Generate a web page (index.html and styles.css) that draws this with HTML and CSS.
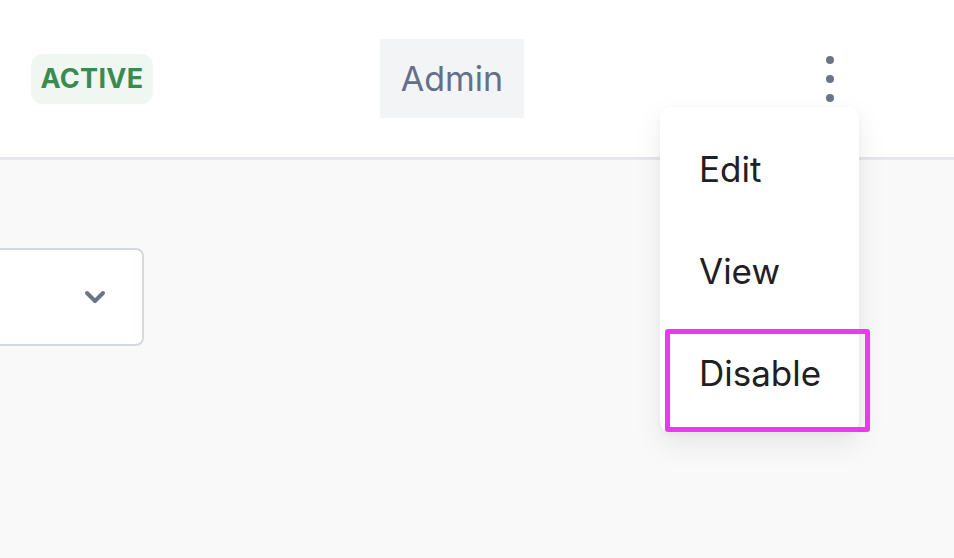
FILE: index.html
```html
<!DOCTYPE html>
<html>
<head>
<meta charset="utf-8">
<link rel="stylesheet" href="styles.css">
</head>
<body>
<div class="page">
  <div class="row">
    <div class="cell-status"><span class="badge">ACTIVE</span></div>
    <div class="cell-role"><span class="role">Admin</span></div>
    <div class="cell-actions">
      <button class="kebab" aria-label="Actions">
        <svg width="10" height="48" viewBox="0 0 10 48"><circle cx="5" cy="5" r="4" fill="#6b7589"/><circle cx="5" cy="24" r="4" fill="#6b7589"/><circle cx="5" cy="43" r="4" fill="#6b7589"/></svg>
      </button>
    </div>
  </div>
  <div class="content">
    <div class="select">
      <svg class="chev" width="22" height="14" viewBox="0 0 22 14"><path d="M3 3 L11 11 L19 3" fill="none" stroke="#6b7589" stroke-width="4" stroke-linecap="round" stroke-linejoin="round"/></svg>
    </div>
  </div>
  <div class="menu">
    <div class="item">Edit</div>
    <div class="item">View</div>
    <div class="item">Disable</div>
    <div class="highlight"></div>
  </div>
</div>
</body>
</html>
```

FILE: styles.css
```css
html, body {
  margin: 0;
  padding: 0;
}
body {
  width: 954px;
  height: 558px;
  overflow: hidden;
  background: #f9f9fa;
  font-family: Inter, "Noto Sans", sans-serif;
}
.page {
  position: relative;
  height: 558px;
}
.row {
  display: flex;
  align-items: center;
  height: 157px;
  background: #ffffff;
  border-bottom: 3px solid #e6e7ea;
}
.cell-status {
  width: 380px;
  padding-left: 31px;
  box-sizing: border-box;
}
.badge {
  display: inline-flex;
  align-items: center;
  justify-content: center;
  width: 122px;
  height: 50px;
  border-radius: 12px;
  background: #f0f6f1;
  color: #3a8b4f;
  font-weight: 700;
  font-size: 27px;
  letter-spacing: 0.3px;
}
.cell-role {
  width: 400px;
}
.role {
  display: inline-flex;
  align-items: center;
  justify-content: center;
  width: 144px;
  height: 79px;
  background: #f3f4f6;
  color: #647087;
  font-size: 34px;
}
.cell-actions {
  flex: 1;
  display: flex;
  padding-left: 45px;
}
.kebab {
  border: none;
  background: none;
  padding: 0;
  display: flex;
}
.content {
  padding-top: 88px;
}
.select {
  margin-left: -60px;
  width: 204px;
  border: 2px solid #d5d8de;
  border-radius: 8px;
  background: #ffffff;
  display: flex;
  align-items: center;
  justify-content: flex-end;
  padding-right: 36px;
  box-sizing: border-box;
  height: 98px;
}
.chev {
  display: block;
}
.menu {
  position: absolute;
  left: 660px;
  top: 107px;
  width: 199px;
  padding: 11px 0 8px;
  background: #ffffff;
  border-radius: 10px;
  box-shadow: 0 12px 30px rgba(0, 0, 0, 0.08), 0 2px 6px rgba(0, 0, 0, 0.04);
}
.item {
  height: 102px;
  display: flex;
  align-items: center;
  padding-left: 39px;
  font-size: 35px;
  color: #1f2023;
}
.highlight {
  position: absolute;
  left: 5px;
  top: 222px;
  width: 205px;
  height: 103px;
  box-sizing: border-box;
  border: 5px solid #e93af0;
  border-radius: 3px;
}
```
